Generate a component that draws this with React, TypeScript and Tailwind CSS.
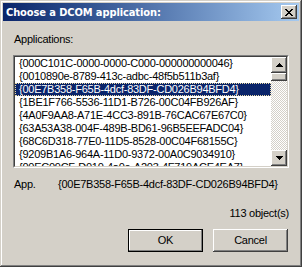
import React from "react";

const raised =
  "shadow-[inset_-1px_-1px_#404040,inset_1px_1px_#fff,inset_-2px_-2px_#808080,inset_2px_2px_#d4d0c8]";

const rows = [
  "{000C101C-0000-0000-C000-000000000046}",
  "{0010890e-8789-413c-adbc-48f5b511b3af}",
  "{00E7B358-F65B-4dcf-83DF-CD026B94BFD4}",
  "{1BE1F766-5536-11D1-B726-00C04FB926AF}",
  "{4A0F9AA8-A71E-4CC3-891B-76CAC67E67C0}",
  "{63A53A38-004F-489B-BD61-96B5EEFADC04}",
  "{68C6D318-77E0-11D5-8528-00C04F68155C}",
  "{9209B1A6-964A-11D0-9372-00A0C9034910}",
  "{00EC09CF-D010-4a0e-A203-4F719ACE4EA7}",
];

function Arrow({ up }: { up: boolean }) {
  return (
    <svg width="7" height="4" viewBox="0 0 7 4" shapeRendering="crispEdges">
      {up ? (
        <path d="M3 0h1v1h1v1h1v1h1v1H0V3h1V2h1V1h1z" fill="#000" />
      ) : (
        <path d="M0 0h7v1H6v1H5v1H4v1H3V3H2V2H1V1H0z" fill="#000" />
      )}
    </svg>
  );
}

function CloseX() {
  const cells: React.ReactElement[] = [];
  for (let i = 0; i < 7; i++) {
    cells.push(<rect key={"a" + i} x={i} y={i} width={2} height={1} />);
    cells.push(<rect key={"b" + i} x={6 - i} y={i} width={2} height={1} />);
  }
  return (
    <svg width="8" height="7" viewBox="0 0 8 7" shapeRendering="crispEdges" fill="#000">
      {cells}
    </svg>
  );
}

export default function App() {
  return (
    <div
      className={`w-[302px] h-[267px] bg-[#d4d0c8] p-[3px] flex flex-col shadow-[inset_-1px_-1px_#404040,inset_1px_1px_#d4d0c8,inset_-2px_-2px_#808080,inset_2px_2px_#fff] text-[11px] tracking-[-0.25px] text-black`}
      style={{ fontFamily: '"Liberation Sans", Arial, sans-serif' }}
    >
      {/* Title bar */}
      <div className="h-[18px] flex items-center justify-between bg-linear-to-r from-[#0a246a] to-[#a6caf0] pl-[3px] pr-[2px]">
        <span
          className="text-white font-bold text-[11px] leading-[13px] tracking-[-0.1px]"
          style={{ fontFamily: '"DejaVu Sans Condensed", "DejaVu Sans", sans-serif' }}
        >
          Choose a DCOM application:
        </span>
        <div className={`w-[16px] h-[14px] bg-[#d4d0c8] flex items-center justify-center ${raised}`}>
          <CloseX />
        </div>
      </div>

      {/* Content */}
      <div className="flex flex-col pl-[10px] pr-[10px]">
        <div className="mt-[12px] h-[13px] leading-[13px] pl-[1px]">Applications:</div>

        {/* List box */}
        <div className="mt-[9px] h-[113px] border border-t-[#808080] border-l-[#808080] border-r-white border-b-white flex">
          <div className="flex-1 flex border border-t-[#404040] border-l-[#404040] border-r-[#d4d0c8] border-b-[#d4d0c8]">
            <div className="flex-1 bg-white overflow-hidden">
              {rows.map((r, i) =>
                i === 2 ? (
                  <div
                    key={i}
                    className="h-[13px] leading-[11px] pl-[3px] bg-[#0a246a] text-white border border-dotted border-[#e9d9a4] whitespace-nowrap"
                  >
                    {r}
                  </div>
                ) : (
                  <div key={i} className="h-[13px] leading-[13px] pl-[4px] whitespace-nowrap">
                    {r}
                  </div>
                )
              )}
            </div>
            {/* Scrollbar */}
            <div className="w-[16px] flex flex-col">
              <div className={`h-[16px] bg-[#d4d0c8] flex items-center justify-center ${raised}`}>
                <Arrow up />
              </div>
              <div className={`h-[8px] bg-[#d4d0c8] ${raised}`} />
              <div className="flex-1 bg-[repeating-conic-gradient(#fff_0_25%,#d4d0c8_0_50%)] bg-[length:2px_2px]" />
              <div className={`h-[16px] bg-[#d4d0c8] flex items-center justify-center ${raised}`}>
                <Arrow up={false} />
              </div>
            </div>
          </div>
        </div>

        {/* App row */}
        <div className="mt-[10px] h-[13px] leading-[13px] flex pl-[1px]">
          <span className="w-[44px]">App.</span>
          <span className="whitespace-nowrap">{"{00E7B358-F65B-4dcf-83DF-CD026B94BFD4}"}</span>
        </div>

        <div className="mt-[16px] h-[13px] leading-[13px] text-right">113 object(s)</div>

        {/* Buttons */}
        <div className="mt-[9px] flex justify-end gap-[10px] pr-[1px]">
          <div className="w-[75px] h-[23px] border border-black bg-[#d4d0c8] shadow-[inset_-1px_-1px_#808080,inset_1px_1px_#fff] flex items-center justify-center">
            OK
          </div>
          <div className={`w-[75px] h-[23px] bg-[#d4d0c8] flex items-center justify-center ${raised}`}>
            Cancel
          </div>
        </div>
      </div>
    </div>
  );
}
